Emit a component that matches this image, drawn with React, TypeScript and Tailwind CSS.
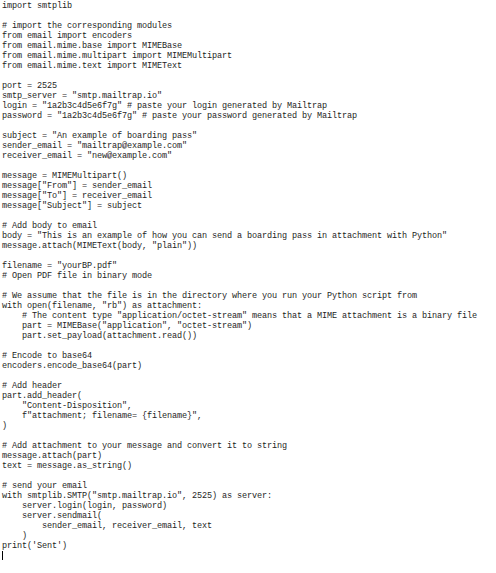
import React from "react";

const code = `import smtplib

# import the corresponding modules
from email import encoders
from email.mime.base import MIMEBase
from email.mime.multipart import MIMEMultipart
from email.mime.text import MIMEText

port = 2525
smtp_server = "smtp.mailtrap.io"
login = "1a2b3c4d5e6f7g" # paste your login generated by Mailtrap
password = "1a2b3c4d5e6f7g" # paste your password generated by Mailtrap

subject = "An example of boarding pass"
sender_email = "mailtrap@example.com"
receiver_email = "new@example.com"

message = MIMEMultipart()
message["From"] = sender_email
message["To"] = receiver_email
message["Subject"] = subject

# Add body to email
body = "This is an example of how you can send a boarding pass in attachment with Python"
message.attach(MIMEText(body, "plain"))

filename = "yourBP.pdf"
# Open PDF file in binary mode

# We assume that the file is in the directory where you run your Python script from
with open(filename, "rb") as attachment:
    # The content type "application/octet-stream" means that a MIME attachment is a binary file
    part = MIMEBase("application", "octet-stream")
    part.set_payload(attachment.read())

# Encode to base64
encoders.encode_base64(part)

# Add header
part.add_header(
    "Content-Disposition",
    f"attachment; filename= {filename}",
)

# Add attachment to your message and convert it to string
message.attach(part)
text = message.as_string()

# send your email
with smtplib.SMTP("smtp.mailtrap.io", 2525) as server:
    server.login(login, password)
    server.sendmail(
        sender_email, receiver_email, text
    )
print('Sent')`;

export default function App() {
  const lines = code.split("\n");
  return (
    <div className="w-[496px] h-[573px] bg-white overflow-hidden pt-[1px] pl-[2px]">
      <div
        className="text-[8.5px] leading-[10px] tracking-[-0.1px] text-[#1e1e1e] whitespace-pre"
        style={{ fontFamily: '"Liberation Mono", "DejaVu Sans Mono", monospace' }}
      >
        {lines.map((l, i) => (
          <div key={i} className="h-[10px]">
            {l === "" ? "\u00a0" : l}
          </div>
        ))}
        <div className="h-[10px] flex items-start">
          <div className="w-[1px] h-[9px] bg-black mt-[0px]" />
        </div>
      </div>
    </div>
  );
}
